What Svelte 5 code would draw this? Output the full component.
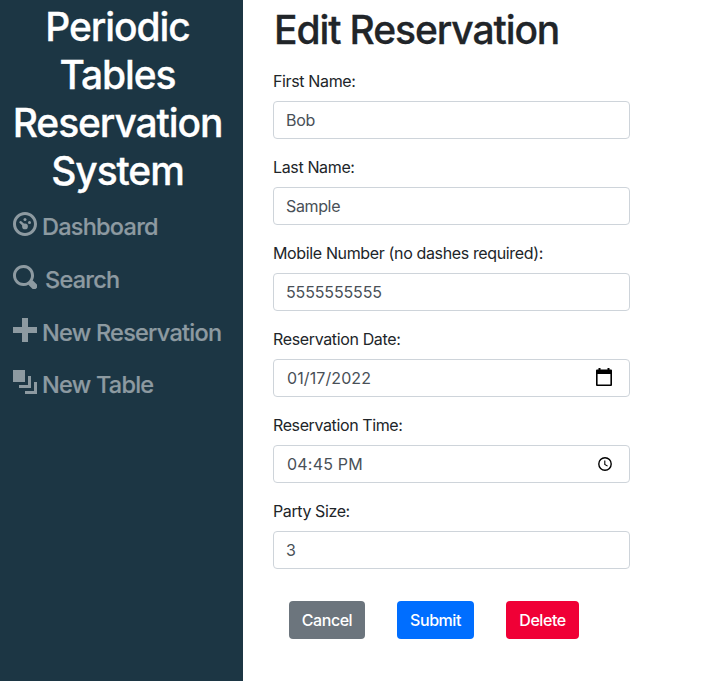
<script>
  const nav = [
    { label: 'Dashboard', icon: 'dial', gap: 5, h: 53 },
    { label: 'Search', icon: 'glass', gap: 8, h: 53 },
    { label: 'New Reservation', icon: 'plus', gap: 5, h: 53 },
    { label: 'New Table', icon: 'layers', gap: 5, h: 51 }
  ];
  const fields = [
    { label: 'First Name:', value: 'Bob', ls: -0.36, vs: -0.3 },
    { label: 'Last Name:', value: 'Sample', ls: -0.36, vs: -0.36 },
    { label: 'Mobile Number (no dashes required):', value: '5555555555', ls: -0.36, vs: -0.14 },
    { label: 'Reservation Date:', value: '01/17/2022', icon: 'calendar', ls: -0.36, vs: 0.1 },
    { label: 'Reservation Time:', value: '04:45 PM', icon: 'clock', ls: -0.39, vs: 0.2 },
    { label: 'Party Size:', value: '3', ls: -0.4, vs: -0.3 }
  ];
</script>

<div class="page">
  <aside>
    <div class="brand">
      <span>Periodic</span>
      <span>Tables</span>
      <span>Reservation</span>
      <span>System</span>
    </div>
    <nav>
      {#each nav as n}
        <a href="#top" style="gap:{n.gap}px;height:{n.h}px">
          <svg viewBox="0 0 8 8" width="24" height="24" fill="currentColor">
            {#if n.icon === 'dial'}
              <path d="M4 0c-2.2 0-4 1.8-4 4s1.8 4 4 4 4-1.8 4-4-1.8-4-4-4zm0 1c1.66 0 3 1.34 3 3s-1.34 3-3 3-3-1.34-3-3 1.34-3 3-3z" />
              <circle cx="4" cy="2.5" r=".5" />
              <circle cx="5.5" cy="3.5" r=".5" />
              <path d="M2.5 3.4L4 4.75" stroke="currentColor" stroke-width=".8" stroke-linecap="round" />
              <circle cx="4" cy="4.8" r=".95" />
            {:else if n.icon === 'glass'}
              <path d="M3.5 0c-1.93 0-3.5 1.57-3.5 3.5s1.57 3.5 3.5 3.5c.59 0 1.17-.14 1.66-.41a1 1 0 0 0 .13.13l1 1a1.02 1.02 0 1 0 1.44-1.44l-1-1a1 1 0 0 0-.16-.13c.27-.49.44-1.06.44-1.66 0-1.93-1.55-3.5-3.5-3.5zm0 1c1.39 0 2.5 1.11 2.5 2.5 0 .66-.24 1.27-.66 1.72-.01.01-.02.02-.03.03a1 1 0 0 0-.13.13c-.44.4-1.04.63-1.69.63-1.39 0-2.5-1.11-2.5-2.5s1.11-2.5 2.5-2.5z" />
            {:else if n.icon === 'plus'}
              <path d="M3 0v3h-3v2h3v3h2v-3h3v-2h-3v-3h-2z" />
            {:else}
              <path d="M0 0v4h4v-4h-4zm5 2v3h-3v1h4v-4h-1zm2 2v3h-3v1h4v-4h-1z" />
            {/if}
          </svg>
          <span>{n.label}</span>
        </a>
      {/each}
    </nav>
  </aside>

  <main>
    <h1>Edit Reservation</h1>
    {#each fields as f}
      <div class="group">
        <div class="label"><span style="letter-spacing:{f.ls}px">{f.label}</span></div>
        <div class="control" class:picker={f.icon}>
          <span style="letter-spacing:{f.vs}px">{f.value}</span>
          {#if f.icon === 'calendar'}
            <svg class="cal" viewBox="0 0 16 18" width="16" height="18">
              <path fill="#000" fill-rule="evenodd" d="M2.5 0h2v1.6h7V0h2v1.6H15a1 1 0 0 1 1 1V17a1 1 0 0 1-1 1H1a1 1 0 0 1-1-1V2.6a1 1 0 0 1 1-1h1.5zM1.6 6v10.4h12.8V6z" />
            </svg>
          {:else if f.icon === 'clock'}
            <svg viewBox="0 0 14 14" width="14" height="14" fill="none" stroke="#000">
              <circle cx="7" cy="7" r="6.2" stroke-width="1.4" />
              <path d="M6.8 3.5v3.9l2.8 1.7" stroke-width="1.1" />
            </svg>
          {/if}
        </div>
      </div>
    {/each}
    <div class="buttons">
      <button class="cancel">Cancel</button>
      <button class="submit">Submit</button>
      <button class="delete">Delete</button>
    </div>
  </main>
</div>

<style>
  :global(body) { margin: 0; background: #fff; }
  .page {
    display: flex;
    width: 720px;
    height: 681px;
    overflow: hidden;
    font: 400 16px/24px Inter, "Liberation Sans", sans-serif;
    color: #212529;
  }
  aside { width: 243px; flex: none; background: #1c3644; }
  .brand {
    display: flex;
    flex-direction: column;
    align-items: center;
    padding: 3px 8px 0 0;
    color: #fff;
    font-size: 39px;
    font-weight: 500;
    line-height: 48px;
    letter-spacing: -1.1px;
    -webkit-text-stroke: 0.3px #fff;
  }
  nav { padding: 5px 0 0 13px; }
  nav a {
    display: flex;
    align-items: center;
    color: #8d9aa1;
    text-decoration: none;
    font-size: 23.5px;
    font-weight: 500;
    letter-spacing: -0.75px;
    white-space: nowrap;
    -webkit-text-stroke: 0.2px #8d9aa1;
  }
  nav svg { flex: none; margin-top: -5px; }
  main { flex: 1; padding: 6px 90px 0 30px; }
  h1 {
    margin: 0 0 15px;
    padding-left: 1px;
    font-size: 39px;
    font-weight: 500;
    line-height: 48px;
    letter-spacing: -1.1px;
    white-space: nowrap;
    -webkit-text-stroke: 0.3px #212529;
  }
  .group { margin-bottom: 16px; }
  .label { margin-bottom: 8px; white-space: nowrap; }
  .control {
    display: flex;
    align-items: center;
    justify-content: space-between;
    box-sizing: border-box;
    height: 38px;
    padding: 0 17px 0 12px;
    border: 1px solid #ced4da;
    border-radius: 4px;
    color: #495057;
  }
  .picker { padding-left: 13px; }
  .cal { margin-top: -2px; }
  .buttons { display: flex; gap: 32px; padding: 16px 0 0 16px; }
  button {
    height: 38px;
    padding: 0;
    border: 0;
    border-radius: 4px;
    color: #fff;
    font: inherit;
    font-weight: 500;
    letter-spacing: -0.45px;
  }
  .cancel { width: 76px; background: #6c757d; }
  .submit { width: 77px; background: #006eff; }
  .delete { width: 73px; background: #f00036; }
</style>
